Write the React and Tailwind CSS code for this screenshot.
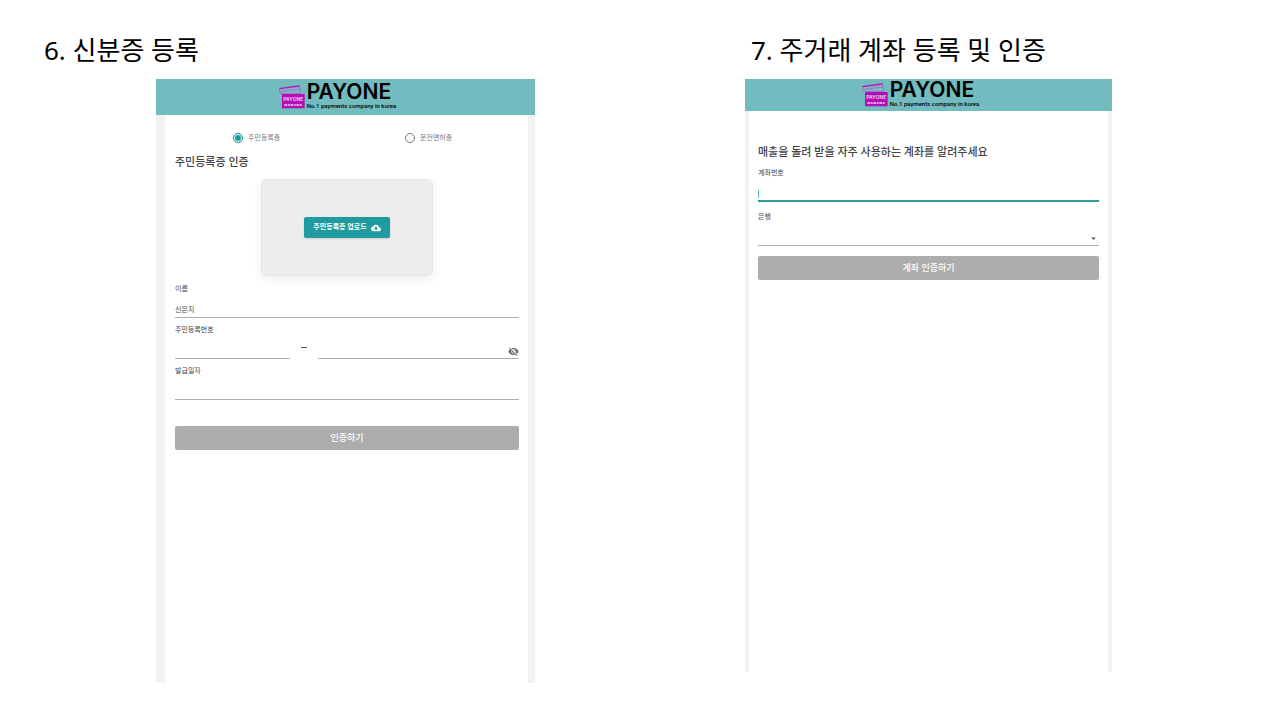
import React from 'react'
import { MdCloudUpload, MdVisibilityOff, MdArrowDropDown } from 'react-icons/md'

const inputStyle = 'block w-full h-[22px] pt-[5px] border-b border-[#b0b0b0] bg-transparent rounded-none text-[7px] leading-4 text-[#444] outline-none'
const labelStyle = 'block text-[7px] leading-[14px] text-[#444]'
const buttonStyle = 'block w-full h-6 rounded-xs bg-[#adadad] text-[9px] leading-6 font-medium text-white'
const radioStyle = 'appearance-none size-[10px] shrink-0 rounded-full border border-[#777] checked:border-[#1f9a9a] checked:bg-[#1f9a9a] checked:shadow-[inset_0_0_0_1px_white]'

function Logo() {
  return (
    <div className="flex items-center gap-[2px] pr-4">
      <svg viewBox="0 0 78 72" className="w-[26px] h-6" aria-hidden="true">
        <path d="M1 10 L61 2 L66 25 L4 25 Z" fill="#86b4c8" stroke="#9c5fc4" strokeWidth="2" />
        <path d="M1 9 L61 1 L62 5 L2 13 Z" fill="#ad22b8" />
        <path d="M5 19 L63 12" stroke="#9c5fc4" strokeWidth="2" />
        <rect x="9" y="27" width="68" height="43" rx="2" fill="#b30fb5" />
        <text x="43" y="47" textAnchor="middle" fontSize="15" fontWeight="600" fill="#f3d6f5" className="font-['Inter',sans-serif]">PAYONE</text>
        <path d="M16 60 H70" stroke="#f3d6f5" strokeWidth="5" strokeDasharray="9 2 5 2" />
      </svg>
      <div className="font-['Inter',sans-serif] text-black whitespace-nowrap">
        <div className="text-[21px] leading-4 font-semibold">PAYONE</div>
        <div className="mt-[2px] font-['Roboto',sans-serif] text-[6px] leading-2 font-medium">No.1 payments company in korea</div>
      </div>
    </div>
  )
}

function IdCard() {
  return (
    <section>
      <h1 className="h-[79px] pt-[34px] pl-11 text-[26px] leading-8 whitespace-nowrap">6. 신분증 등록</h1>

      <div className="w-full max-w-[379px] mx-auto">
        <header className="h-9 bg-[#72bcc0] flex items-center justify-center">
          <Logo />
        </header>

        <form className="min-h-[568px] border-l-[9px] border-r-[7px] border-[#f2f2f2] pl-[10px] pr-[9px] pt-[17px]">
          <div className="grid grid-cols-2 text-[7px] leading-3 text-[#777]">
            <label className="flex items-center gap-[5px] pl-[58px]">
              <input type="radio" name="idType" defaultChecked className={radioStyle} />
              주민등록증
            </label>
            <label className="flex items-center gap-[5px] pl-[58px]">
              <input type="radio" name="idType" className={radioStyle} />
              운전면허증
            </label>
          </div>

          <h2 className="mt-2 text-[11px] leading-5 font-medium text-[#444]">주민등록증 인증</h2>

          <div className="mt-[7px] mx-auto w-1/2 h-[97px] rounded-md border border-[#e8e8e8] bg-[#ededed] shadow-[0_3px_10px_rgba(0,0,0,0.07)] flex items-center justify-center">
            <button type="button" className="h-[21px] px-[9px] rounded-xs bg-[#1f9a9e] shadow-sm text-[7px] font-bold text-white whitespace-nowrap flex items-center gap-1">
              주민등록증 업로드
              <MdCloudUpload className="size-[10px]" />
            </button>
          </div>

          <div className="mt-[6px]">
            <label htmlFor="name" className={labelStyle}>이름</label>
            <input id="name" type="text" defaultValue="신은지" className={inputStyle} />
          </div>

          <div className="mt-[5px]">
            <label htmlFor="idFront" className={labelStyle}>주민등록번호</label>
            <div className="grid grid-cols-[115fr_28fr_201fr]">
              <input id="idFront" type="text" className={inputStyle} />
              <div className="pt-[10px] flex justify-center">
                <span className="w-[6px] h-px bg-[#555]"></span>
              </div>
              <div className="relative">
                <input type="password" aria-label="주민등록번호" className={inputStyle} />
                <MdVisibilityOff className="absolute right-0 bottom-[2px] size-[11px] text-[#666]" />
              </div>
            </div>
          </div>

          <div className="mt-[5px]">
            <label htmlFor="issued" className={labelStyle}>발급일자</label>
            <input id="issued" type="text" className={inputStyle} />
          </div>

          <button type="button" className={buttonStyle + ' mt-[26px]'}>인증하기</button>
        </form>
      </div>
    </section>
  )
}

function Account() {
  return (
    <section>
      <h1 className="h-[79px] pt-[34px] pl-[60px] text-[26px] leading-8 whitespace-nowrap">7. 주거래 계좌 등록 및 인증</h1>

      <div className="w-full max-w-[367px] ml-[54px]">
        <header className="h-8 bg-[#72bcc0] flex items-center justify-center">
          <Logo />
        </header>

        <form className="min-h-[561px] border-x-4 border-[#f2f2f2] px-[9px] pt-[31px]">
          <h2 className="text-[11px] leading-5 font-medium text-[#444]">매출을 돌려 받을 자주 사용하는 계좌를 알려주세요</h2>

          <div className="mt-1">
            <label htmlFor="account" className={labelStyle}>계좌번호</label>
            <div className="relative">
              <input id="account" type="text" className="block w-full h-[22px] border-b-2 border-[#2b9c9c] bg-transparent text-[7px] outline-none" />
              <span className="absolute left-0 bottom-1 w-px h-2 bg-[#5fb3c4]"></span>
            </div>
          </div>

          <div className="mt-2">
            <label htmlFor="bank" className={labelStyle}>은행</label>
            <div className="relative">
              <select id="bank" className={inputStyle + ' appearance-none'}>
                <option></option>
              </select>
              <MdArrowDropDown className="absolute right-0 bottom-[2px] size-[11px] text-[#555] pointer-events-none" />
            </div>
          </div>

          <button type="button" className={buttonStyle + ' mt-[10px]'}>계좌 인증하기</button>
        </form>
      </div>
    </section>
  )
}

function App() {
  return (
    <main className="min-h-screen bg-white text-black grid grid-cols-[691fr_589fr] font-['Noto_Sans','Noto_Sans_CJK_KR',sans-serif]">
      <IdCard />
      <Account />
    </main>
  )
}

export default App
